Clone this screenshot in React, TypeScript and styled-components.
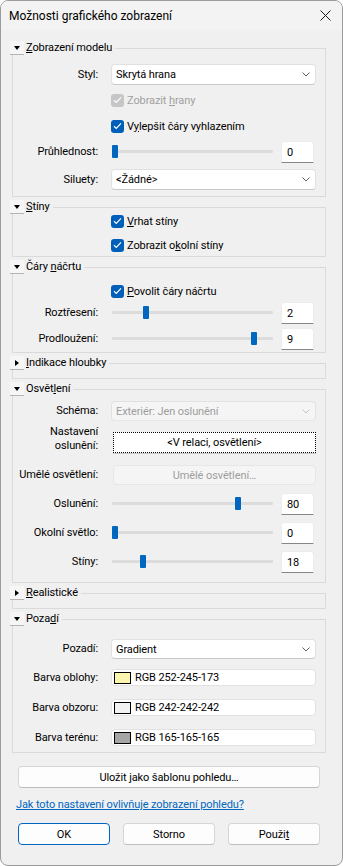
import React from "react";
import styled, { createGlobalStyle } from "styled-components";

const GlobalStyle = createGlobalStyle`
  html, body {
    margin: 0;
    padding: 0;
    background: #ffffff;
  }
  body {
    font-family: Roboto, "Liberation Sans", sans-serif;
    font-size: 11px;
    letter-spacing: -0.1px;
    color: #000;
  }
  * {
    box-sizing: border-box;
  }
`;

const Window = styled.div`
  width: 343px;
  height: 866px;
  border: 1px solid #9c9c9c;
  border-radius: 8px;
  background: #f0f0f0;
  overflow: hidden;
  display: flex;
  flex-direction: column;
`;

const TitleBar = styled.div`
  height: 29px;
  flex: none;
  display: flex;
  align-items: center;
  justify-content: space-between;
  padding: 0 11px 0 8px;
  background: #f3f3f3;
  font-size: 12px;
  letter-spacing: 0;
`;

const Body = styled.div`
  flex: 1;
  display: flex;
  flex-direction: column;
  padding: 11px 16px 0 11px;
`;

const GroupStack = styled.div`
  display: flex;
  flex-direction: column;
  gap: 3px;
`;

const Group = styled.fieldset<{ $pb: number }>`
  margin: 0;
  min-width: 0;
  padding: 0 9px ${(p) => p.$pb}px 0;
  border: 1px solid #dadada;
`;

const Legend = styled.legend`
  margin-left: -3px;
  padding: 0 3px 0 0;
  height: 14px;
  display: flex;
  align-items: center;
  gap: 2px;
  line-height: 14px;
`;

const Toggle = styled.span`
  width: 14px;
  height: 14px;
  display: flex;
  align-items: center;
  justify-content: center;
  background: #f6f6f6;
  border-bottom: 1px solid #b4b4b4;
`;

const Arrow = styled.span<{ $open: boolean }>`
  width: 0;
  height: 0;
  ${(p) =>
    p.$open
      ? `border-left: 3.5px solid transparent;
         border-right: 3.5px solid transparent;
         border-top: 4px solid #000;`
      : `border-top: 3.5px solid transparent;
         border-bottom: 3.5px solid transparent;
         border-left: 4px solid #000;`}
`;

const Row = styled.div<{ $mt: number; $align?: string }>`
  display: grid;
  grid-template-columns: 85px 205px;
  column-gap: 13px;
  align-items: ${(p) => p.$align ?? "center"};
  margin-top: ${(p) => p.$mt}px;
`;

const Label = styled.span`
  text-align: right;
  white-space: nowrap;
  line-height: 14px;
`;

const Select = styled.div<{ $h: number; $disabled?: boolean }>`
  height: ${(p) => p.$h}px;
  display: flex;
  align-items: center;
  justify-content: space-between;
  padding: 0 5px 0 4px;
  background: ${(p) => (p.$disabled ? "#f5f5f5" : "#ffffff")};
  color: ${(p) => (p.$disabled ? "#9d9d9d" : "#000")};
  border: 1px solid #e1e1e1;
  border-bottom-color: ${(p) => (p.$disabled ? "#e6e6e6" : "#c9c9c9")};
  border-radius: 4px;
`;

const CheckCell = styled.label<{ $disabled?: boolean }>`
  grid-column: 2;
  display: flex;
  align-items: center;
  gap: 3px;
  height: 14px;
  color: ${(p) => (p.$disabled ? "#a0a0a0" : "#000")};
`;

const CheckBox = styled.span<{ $disabled?: boolean }>`
  width: 13px;
  height: 13px;
  border-radius: 3px;
  display: flex;
  align-items: center;
  justify-content: center;
  background: ${(p) => (p.$disabled ? "#c6c6c6" : "#005fb8")};
`;

const SliderWrap = styled.div`
  display: flex;
  align-items: center;
  gap: 8px;
`;

const Track = styled.div`
  position: relative;
  width: 162px;
  height: 22px;

  &::before {
    content: "";
    position: absolute;
    left: 1px;
    right: 0;
    top: 9px;
    height: 3px;
    background: #dcdcdc;
    border-radius: 1px;
  }
`;

const Thumb = styled.span`
  position: absolute;
  top: 4px;
  width: 6px;
  height: 13px;
  background: #0067c0;
  border-radius: 1px;
`;

const NumBox = styled.div`
  width: 33px;
  height: 22px;
  display: flex;
  align-items: center;
  padding-left: 5px;
  background: #ffffff;
  border: 1px solid #ececec;
  border-bottom-color: #868686;
  border-radius: 3px 3px 0 0;
`;

const FocusButton = styled.div`
  height: 21px;
  display: flex;
  align-items: center;
  justify-content: center;
  margin-left: 2px;
  background: #ffffff;
  border: 1px dotted #000;
  box-shadow: 0 1px 0 #c8c8c8;
`;

const FlatButton = styled.div`
  height: 20px;
  display: flex;
  align-items: center;
  justify-content: center;
  margin-left: 2px;
  background: #f5f5f5;
  color: #9d9d9d;
  border: 1px solid #e6e6e6;
  border-radius: 4px;
`;

const ColorField = styled.div`
  height: 17px;
  display: flex;
  align-items: center;
  gap: 4px;
  padding-left: 2px;
  background: #ffffff;
  border: 1px solid #e2e2e2;
  border-radius: 4px;
`;

const Swatch = styled.span<{ $color: string }>`
  width: 17px;
  height: 12px;
  border: 1px solid #000;
  background: ${(p) => p.$color};
`;

const Footer = styled.div`
  display: flex;
  flex-direction: column;
  padding: 0 6px;
`;

const PushButton = styled.button<{ $mt?: number; $primary?: boolean }>`
  height: 22px;
  margin-top: ${(p) => p.$mt ?? 0}px;
  padding: 0;
  font: inherit;
  letter-spacing: inherit;
  color: #000;
  background: #fdfdfd;
  border: 1px solid ${(p) => (p.$primary ? "#0067c0" : "#d6d6d6")};
  border-bottom-color: ${(p) => (p.$primary ? "#0067c0" : "#bdbdbd")};
  border-radius: 4px;
`;

const HelpLink = styled.a`
  margin: 10px 0 0 -2px;
  line-height: 14px;
  color: #0067c0;
  text-decoration: underline;
`;

const ButtonRow = styled.div`
  display: grid;
  grid-template-columns: repeat(3, 1fr);
  column-gap: 13px;
  margin-top: 11px;
`;

const Chevron = ({ color = "#606060" }: { color?: string }) => (
  <svg width="8" height="5" viewBox="0 0 8 5">
    <polyline points="0.5,0.5 4,4 7.5,0.5" fill="none" stroke={color} strokeWidth="1" />
  </svg>
);

const CloseIcon = () => (
  <svg width="11" height="11" viewBox="0 0 11 11">
    <path d="M0.5 0.5 L10.5 10.5 M10.5 0.5 L0.5 10.5" stroke="#1a1a1a" strokeWidth="1" />
  </svg>
);

const Section = ({
  title,
  open = true,
  pb,
  children,
}: {
  title: React.ReactNode;
  open?: boolean;
  pb: number;
  children?: React.ReactNode;
}) => (
  <Group $pb={pb}>
    <Legend>
      <Toggle>
        <Arrow $open={open} />
      </Toggle>
      <span>{title}</span>
    </Legend>
    {children}
  </Group>
);

const Check = ({ mt, disabled, children }: { mt: number; disabled?: boolean; children: React.ReactNode }) => (
  <Row $mt={mt}>
    <CheckCell $disabled={disabled}>
      <CheckBox $disabled={disabled}>
        <svg width="9" height="8" viewBox="0 0 9 8">
          <path d="M1 4.2 L3.3 6.4 L8 1.4" fill="none" stroke="#fff" strokeWidth="1.2" />
        </svg>
      </CheckBox>
      <span>{children}</span>
    </CheckCell>
  </Row>
);

const SliderRow = ({ mt, label, value, max }: { mt: number; label: string; value: number; max: number }) => (
  <Row $mt={mt}>
    <Label>{label}</Label>
    <SliderWrap>
      <Track>
        <Thumb style={{ left: `${1 + (value / max) * 154}px` }} />
      </Track>
      <NumBox>{value}</NumBox>
    </SliderWrap>
  </Row>
);

const ColorRow = ({ mt, label, color, text }: { mt: number; label: string; color: string; text: string }) => (
  <Row $mt={mt}>
    <Label>{label}</Label>
    <ColorField>
      <Swatch $color={color} />
      <span>{text}</span>
    </ColorField>
  </Row>
);

const App = () => {
  return (
    <>
      <GlobalStyle />
      <Window>
        <TitleBar>
          <span>Možnosti grafického zobrazení</span>
          <CloseIcon />
        </TitleBar>
        <Body>
          <GroupStack>
            <Section title={<><u>Z</u>obrazení modelu</>} pb={6}>
              <Row $mt={9}>
                <Label>Styl:</Label>
                <Select $h={21}>
                  Skrytá hrana
                  <Chevron />
                </Select>
              </Row>
              <Check mt={8} disabled>
                Zobrazit <u>h</u>rany
              </Check>
              <Check mt={12}>
                V<u>y</u>lepšit čáry vyhlazením
              </Check>
              <SliderRow mt={8} label="Průhlednost:" value={0} max={100} />
              <Row $mt={6}>
                <Label>Siluety:</Label>
                <Select $h={21}>
                  &lt;Žádné&gt;
                  <Chevron />
                </Select>
              </Row>
            </Section>

            <Section title={<><u>S</u>tíny</>} pb={4}>
              <Check mt={0}>
                <u>V</u>rhat stíny
              </Check>
              <Check mt={10}>
                Zobrazit o<u>k</u>olní stíny
              </Check>
            </Section>

            <Section title={<>Čáry <u>n</u>áčrtu</>} pb={2}>
              <Check mt={10}>
                <u>P</u>ovolit čáry náčrtu
              </Check>
              <SliderRow mt={4} label="Roztřesení:" value={2} max={10} />
              <SliderRow mt={4} label="Prodloužení:" value={9} max={10} />
            </Section>

            <Section title={<><u>I</u>ndikace hloubky</>} open={false} pb={8} />

            <Section title={<>Osvět<u>l</u>ení</>} pb={9}>
              <Row $mt={5}>
                <Label>Schéma:</Label>
                <Select $h={20} $disabled>
                  Exteriér: Jen oslunění
                  <Chevron color="#c4c4c4" />
                </Select>
              </Row>
              <Row $mt={4} $align="end">
                <Label>
                  Nastavení
                  <br />
                  oslunění:
                </Label>
                <FocusButton>&lt;V relaci, osvětlení&gt;</FocusButton>
              </Row>
              <Row $mt={12}>
                <Label>Umělé osvětlení:</Label>
                <FlatButton>Umělé osvětlení…</FlatButton>
              </Row>
              <SliderRow mt={8} label="Oslunění:" value={80} max={100} />
              <SliderRow mt={7} label="Okolní světlo:" value={0} max={100} />
              <SliderRow mt={7} label="Stíny:" value={18} max={100} />
            </Section>

            <Section title={<><u>R</u>ealistické</>} open={false} pb={8} />

            <Section title={<>Poza<u>d</u>í</>} pb={6}>
              <Row $mt={13}>
                <Label>Pozadí:</Label>
                <Select $h={20}>
                  Gradient
                  <Chevron />
                </Select>
              </Row>
              <ColorRow mt={10} label="Barva oblohy:" color="rgb(252,245,173)" text="RGB 252-245-173" />
              <ColorRow mt={13} label="Barva obzoru:" color="rgb(242,242,242)" text="RGB 242-242-242" />
              <ColorRow mt={13} label="Barva terénu:" color="rgb(165,165,165)" text="RGB 165-165-165" />
            </Section>
          </GroupStack>

          <Footer>
            <PushButton $mt={13}>Uložit jako šablonu pohledu…</PushButton>
            <HelpLink href="#">Jak toto nastavení ovlivňuje zobrazení pohledu?</HelpLink>
            <ButtonRow>
              <PushButton $primary>OK</PushButton>
              <PushButton>Storno</PushButton>
              <PushButton>
                Použi<u>t</u>
              </PushButton>
            </ButtonRow>
          </Footer>
        </Body>
      </Window>
    </>
  );
};

export default App;
